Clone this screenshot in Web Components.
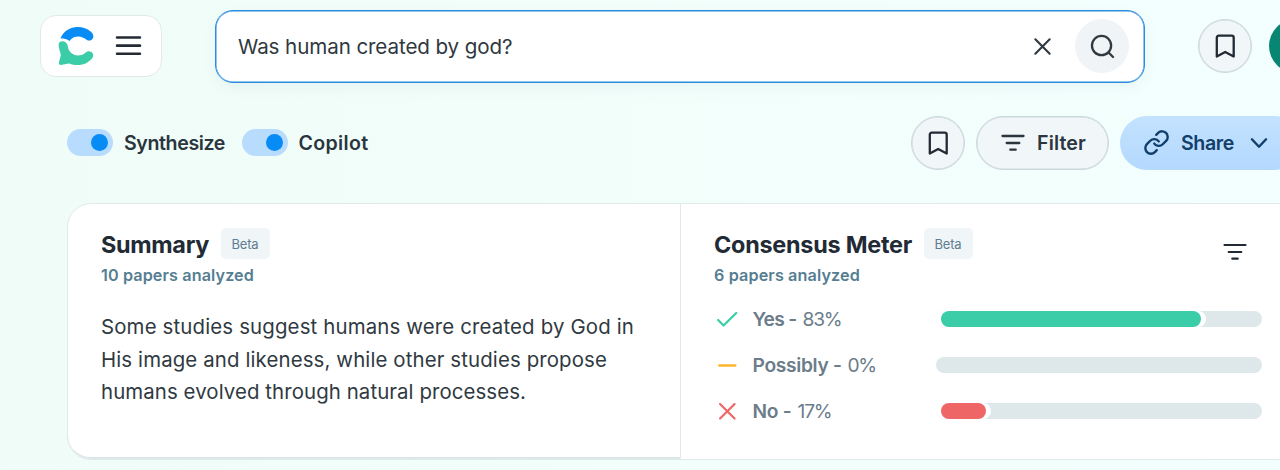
<!DOCTYPE html>
<html lang="en">
<head>
<meta charset="utf-8">
<title>Consensus</title>
<style>
html,body{margin:0;height:100%;overflow:hidden}
body{background:linear-gradient(90deg,#f0fcf8 0%,#f2fefa 45%,#f3fffe 100%);font-family:Inter,"Liberation Sans",sans-serif;color:#222b33}
</style>
</head>
<body>
<search-page></search-page>
<script>
const define = (name, html, setup) => {
  const template = document.createElement('template');
  template.innerHTML = html;
  customElements.define(name, class extends HTMLElement {
    connectedCallback() {
      if (this.shadowRoot) return;
      this.attachShadow({ mode: 'open' }).append(template.content.cloneNode(true));
      if (setup) setup.call(this, this.shadowRoot);
    }
  });
};

const icons = {
  menu: ['0 0 24 24', '<path d="M1 3.4h22M1 11.2h22M1 19h22"/>'],
  close: ['0 0 24 24', '<path d="m4.5 4.5 15 15m0-15-15 15"/>'],
  search: ['0 0 24 24', '<circle cx="11" cy="11" r="10"/><path d="m18.3 18.3 4.7 4.7"/>'],
  bookmark: ['0 0 24 24', '<path d="M3.8 22.5V3.7Q3.8 1.7 5.8 1.7H18.7Q20.7 1.7 20.7 3.7V22.5L12.2 17.9Z"/>'],
  filter: ['0 0 24 24', '<path d="M1.5 5h21M5.7 12h12.6M9.3 18.7h5.4"/>'],
  link: ['0 0 24 24', '<path d="M10 13a5 5 0 0 0 7.54.54l3-3a5 5 0 0 0-7.07-7.07l-1.72 1.71"/><path d="M14 11a5 5 0 0 0-7.54-.54l-3 3a5 5 0 0 0 7.07 7.07l1.71-1.71"/>'],
  chevron: ['0 0 24 24', '<path d="m3.5 7.5 8.5 9 8.5-9"/>'],
  check: ['0 0 24 24', '<path d="m1.3 12.6 6.2 6.3L22 4.6"/>'],
  minus: ['0 0 24 24', '<path d="M2.5 12h18.5"/>'],
  cross: ['0 0 24 24', '<path d="m3.5 3.5 16.6 16.6m0-16.6L3.5 20.1"/>']
};

define('ui-icon', `<style>:host{display:block;flex:none}svg{display:block;overflow:visible;fill:none;stroke:currentColor;stroke-linecap:round;stroke-linejoin:round}</style><svg></svg>`, function (root) {
  const size = +this.getAttribute('size');
  const svg = root.querySelector('svg');
  const [box, shapes] = icons[this.getAttribute('name')];
  svg.setAttribute('viewBox', box);
  svg.setAttribute('width', size);
  svg.setAttribute('height', size);
  svg.style.strokeWidth = (+this.getAttribute('weight') || 2) * 24 / size;
  svg.innerHTML = shapes;
});

/* A single line of text whose tracking is adjusted to a set advance width. */
define('fit-text', `<style>:host{display:block;flex:none;white-space:pre}span{display:inline-block}</style><span><slot></slot></span>`, function (root) {
  const span = root.querySelector('span');
  const width = +this.getAttribute('width');
  const fit = () => {
    span.style.letterSpacing = '0px';
    const gap = (width - span.getBoundingClientRect().width) / this.textContent.length;
    span.style.letterSpacing = gap + 'px';
  };
  requestAnimationFrame(fit);
  fit();
});

define('brand-mark', `<style>:host{display:block;width:38px;height:40px;flex:none}svg{display:block;overflow:visible}</style>
<svg width="38" height="40" viewBox="0 0 38 40" fill="none">
<path d="M3.5 12.2C6.5 5 13 1 20.7 1c5.2 0 9.6 1.6 13.6 5 4.9 5.1.2 10.4-4.4 8-5.2-4.8-13.2-5-17.4 1-2.3-1.8-5.3-2.8-9-2.8Z" fill="#078bf4"/>
<path d="M2.9 15.8c3.2-1.8 7.3.2 7.8 3.8.6 6.3 4.8 9.8 10.3 9.8 3 0 5.7-1 8-3.2 4.2-2.8 9.2 1.3 6.5 5.6-3.4 4.6-8.8 7.3-14.9 7.3-3 0-5.7-.5-8.4-1.5-2.9.1-5.3 1.2-8.2 1.4-1.7 0-2.5-1.2-2-3l1.8-6.8c-.4-3.2-1.5-5-2-8.4-.3-2.3-.1-3.7 1.1-5Z" fill="#3acda7"/>
</svg>`);

define('app-nav', `<style>:host{display:flex;align-items:center;box-sizing:border-box;width:122px;height:62px;margin-top:5px;padding:0 20px 0 16px;justify-content:space-between;background:#fff;border:1.5px solid #e2eae9;border-radius:16px}</style>
<brand-mark></brand-mark><ui-icon name="menu" size="25" weight="2.6"></ui-icon>`);

define('round-button', `<style>:host{display:grid;place-items:center;box-sizing:border-box;width:54px;height:54px;flex:none;border-radius:50%;background:#f1f6f9;border:1px solid #cbd8db;box-shadow:inset 0 0 0 .5px #cbd8db}:host([plain]){border:0;background:#f0f4f7;box-shadow:none}</style><slot></slot>`);

define('search-field', `<style>:host{display:flex;align-items:center;box-sizing:border-box;width:930px;height:73px;padding:0 15px 1px 22px;background:#fff;border:1px solid #2b8bdc;border-radius:18px;box-shadow:inset 0 0 0 .5px #2b8bdc,0 5px 14px rgba(50,120,130,.06);font-size:20.6px;line-height:30px;color:#303840}
.q{flex:1;padding-top:2px}ui-icon{margin-right:21px}round-button ui-icon{margin:0}</style>
<div class="q"><slot></slot></div><ui-icon name="close" size="23" weight="2.1"></ui-icon><round-button plain><ui-icon name="search" size="23" weight="2.3"></ui-icon></round-button>`);

define('user-avatar', `<style>:host{display:block;width:54px;height:54px;flex:none;border-radius:50%;background:#078673}</style>`);

define('toggle-switch', `<style>:host{display:flex;align-items:center;gap:11px;font-size:19.6px;line-height:28px;font-weight:600;color:#2a353e}
i{display:flex;align-items:center;justify-content:flex-end;box-sizing:border-box;width:46px;height:27px;padding-right:5px;border-radius:14px;background:#b8dcfd}
b{width:17px;height:17px;border-radius:50%;background:#078bf5}</style><i><b></b></i><slot></slot>`);

define('pill-button', `<style>:host{display:flex;align-items:center;box-sizing:border-box;height:54px;flex:none;border-radius:27px;font-size:19.6px;font-weight:600;line-height:28px;color:#2a353e;background:#f1f6f9;border:1px solid #cbd8db;box-shadow:inset 0 0 0 .5px #cbd8db;width:133px;padding-left:24px;gap:12px}
:host([primary]){width:182px;background:linear-gradient(#c3e2fe,#b3d9fe);border:0;box-shadow:none;color:#123f6a;padding-left:23px;gap:11px}</style><slot></slot>`);

define('beta-tag', `<style>:host{display:flex;align-items:center;justify-content:center;width:49px;height:31px;border-radius:5px;background:#f0f5f8;color:#5d7e90;font-size:13px;line-height:20px}</style><fit-text width="27">Beta</fit-text>`);

define('panel-title', `<style>:host{display:block}.t{display:flex;align-items:center;gap:11.5px;height:31px;font-size:23.4px;font-weight:650;line-height:31px;color:#222b35}
.s{font-size:16.2px;font-weight:600;line-height:24px;color:#567e92;margin-top:4px}::slotted([slot=title]){position:relative;top:1px}beta-tag{font-weight:400}</style>
<div class="t"><slot name="title"></slot><beta-tag></beta-tag></div><div class="s"><slot name="note"></slot></div>`);

define('meter-row', `<style>:host{display:flex;align-items:center;height:46px;color:#6b7c8a;font-size:19.2px;line-height:28px}
.l{display:flex;align-items:center;width:222px;flex:none}::slotted([slot=icon]){margin:0 14.5px 0 3px}
::slotted([slot=name]){font-weight:600;margin-right:6px}
.track{display:flex;width:326px;height:16px;border-radius:8px;background:#dee8eb;overflow:hidden}
.gap{box-sizing:border-box;background:#fff;padding:0 5px;border-radius:0 12px 12px 0}.fill{height:16px;border-radius:8px}</style>
<div class="l"><slot name="icon"></slot><slot name="name"></slot><slot name="value"></slot></div><div class="track"></div>`, function (root) {
  const bar = +this.getAttribute('bar');
  if (bar) {
    const gap = document.createElement('div');
    gap.className = 'gap';
    gap.style.width = bar + 10 + 'px';
    gap.innerHTML = '<div class="fill"></div>';
    gap.firstChild.style.background = this.getAttribute('color');
    root.querySelector('.track').append(gap);
  }
});

define('summary-panel', `<style>:host{display:block;box-sizing:border-box;width:613px;flex:none;padding:24px 0 0 33px;border-right:1.5px solid #e0e8ea;border-bottom:2px solid #dce8e8;border-bottom-left-radius:23px}
.body{margin-top:24px;font-size:20.4px;line-height:32.6px;color:#303941}</style>
<panel-title><fit-text slot="title" width="108">Summary</fit-text><fit-text slot="note" width="153">10 papers analyzed</fit-text></panel-title>
<div class="body"><fit-text width="533">Some studies suggest humans were created by God in</fit-text><fit-text width="506">His image and likeness, while other studies propose</fit-text><fit-text width="425">humans evolved through natural processes.</fit-text></div>`);

define('consensus-panel', `<style>:host{display:block;flex:1;padding:24px 0 0 33px}.head{display:flex;justify-content:space-between;width:533px}.head ui-icon{margin-top:12px}
.rows{margin-top:9px}</style>
<div class="head"><panel-title><fit-text slot="title" width="198">Consensus Meter</fit-text><fit-text slot="note" width="146">6 papers analyzed</fit-text></panel-title><ui-icon name="filter" size="24" weight="2.2"></ui-icon></div>
<div class="rows">
<meter-row color="#3acda7" bar="260"><ui-icon slot="icon" name="check" size="21" weight="2.2" style="color:#3acda7"></ui-icon><fit-text slot="name" width="44">Yes -</fit-text><fit-text slot="value" width="39">83%</fit-text></meter-row>
<meter-row><ui-icon slot="icon" name="minus" size="21" weight="2.3" style="color:#ffb52e"></ui-icon><fit-text slot="name" width="89">Possibly -</fit-text><fit-text slot="value" width="28">0%</fit-text></meter-row>
<meter-row color="#ee6666" bar="45"><ui-icon slot="icon" name="cross" size="21" weight="2.2" style="color:#ee6666"></ui-icon><fit-text slot="name" width="39">No -</fit-text><fit-text slot="value" width="34">17%</fit-text></meter-row>
</div>`);

define('search-page', `<style>:host{display:block;width:1280px;height:470px;overflow:hidden}
header{display:flex;align-items:flex-start;padding:10px 0 0 40px;height:73px}
search-field{flex:none;margin-left:53px}app-nav{flex:none}header>round-button{margin:9px 17px 0 53px}user-avatar{margin-top:9px}
.tools{display:flex;align-items:center;height:54px;margin-top:32.5px;padding-left:67px}
toggle-switch+toggle-switch{margin-left:16.5px}.actions{display:flex;gap:11px;margin-left:542.5px;flex:none}
.card{display:flex;box-sizing:border-box;width:1240px;height:257px;margin:33.5px 0 0 67px;background:#fff;border:1.5px solid #dfeaea;border-radius:24px}</style>
<header><app-nav></app-nav><search-field><fit-text width="274.5">Was human created by god?</fit-text></search-field><round-button><ui-icon name="bookmark" size="24" weight="2.3"></ui-icon></round-button><user-avatar></user-avatar></header>
<div class="tools"><toggle-switch><fit-text width="101">Synthesize</fit-text></toggle-switch><toggle-switch><fit-text width="70">Copilot</fit-text></toggle-switch>
<div class="actions"><round-button><ui-icon name="bookmark" size="24" weight="2.3"></ui-icon></round-button><pill-button><ui-icon name="filter" size="24" weight="2.3"></ui-icon><fit-text width="49">Filter</fit-text></pill-button><pill-button primary><ui-icon name="link" size="27" weight="2.4"></ui-icon><fit-text width="53">Share</fit-text><ui-icon name="chevron" size="20" weight="2.4" style="margin-left:4px"></ui-icon></pill-button></div></div>
<div class="card"><summary-panel></summary-panel><consensus-panel></consensus-panel></div>`);
</script>
</body>
</html>
